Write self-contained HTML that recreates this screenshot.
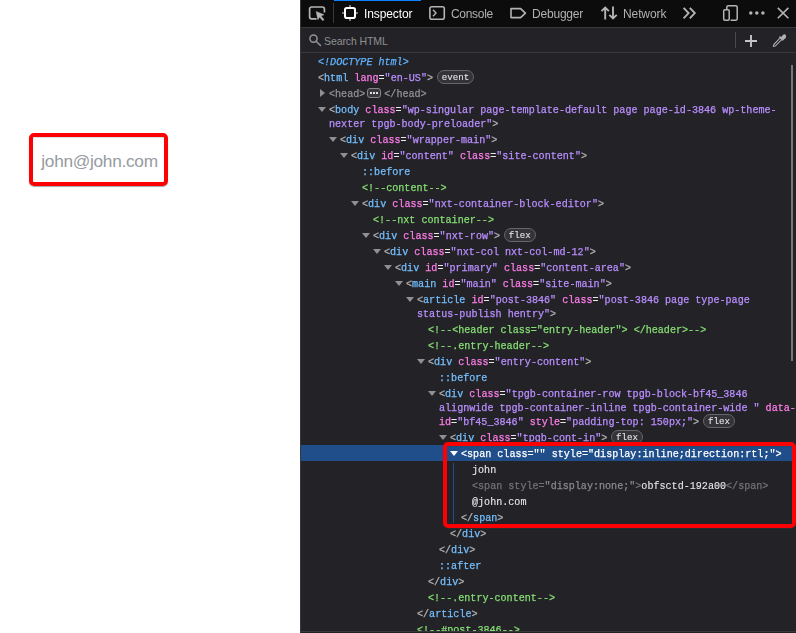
<!DOCTYPE html>
<html lang="en">
<head>
<meta charset="utf-8">
<title>Inspector</title>
<style>
html,body{margin:0;padding:0;}
body{width:796px;height:633px;overflow:hidden;background:#fff;position:relative;font-family:"Liberation Sans",sans-serif;}
#page{position:absolute;left:0;top:0;width:300px;height:633px;background:#fff;}
#mail{position:absolute;left:41.3px;top:149px;font-size:17.3px;line-height:24px;color:#979aa0;white-space:pre;letter-spacing:-0.3px;}
.redbox{position:absolute;box-sizing:border-box;border:4px solid #fd0003;border-radius:5px;box-shadow:0 1px 1px rgba(40,60,60,.45);}
.redbox i{position:absolute;left:0;top:0;right:0;bottom:0;border-radius:2px;box-shadow:inset 0 1px 1px rgba(40,60,60,.18);}
#dt{position:absolute;left:300px;top:0;width:496px;height:633px;background:#232327;overflow:hidden;}
#tb{position:absolute;left:0;top:0;width:496px;height:27px;background:#0c0c0d;border-bottom:1px solid #38383d;}
#tb .tab{will-change:transform;position:absolute;top:1px;height:27px;font-size:12px;line-height:27px;letter-spacing:-0.1px;color:#b1b1b3;white-space:pre;}
#tb .tab.sel{color:#fff;}
#tb svg{position:absolute;}
#sb{position:absolute;left:0;top:28px;width:496px;height:24px;background:#232327;border-bottom:1px solid #38383d;}
#sb .ph{position:absolute;left:24px;top:0;font-size:10.5px;line-height:26px;color:#8f8f94;white-space:pre;letter-spacing:-0.1px;}
#sb svg{position:absolute;}
#mk{position:absolute;left:0;top:0;width:496px;height:633px;font-family:"Liberation Mono",monospace;font-size:10.08px;line-height:14px;color:#b1b1b3;-webkit-text-stroke:0.25px;}
.r{position:absolute;white-space:pre;height:14px;}
.t{color:#75bfff;}
.n{color:#ff7de9;}
.v{color:#b98eff;}
.c{color:#86de74;}
.p{color:#75bfff;}
.d{color:#5fb2ff;font-style:italic;}
.x{color:#e9e9ec;-webkit-text-stroke:0.1px;}
.g{color:#939395;}
.w{color:#fff;}
.k{color:#b1b1b3;}
.h{color:#727276;}
.h2{color:#8a8a8e;}
.e{display:inline-block;vertical-align:top;margin:0 3px 0 2px;width:14px;height:10px;box-sizing:border-box;border:1px solid #85858a;border-radius:3px;background:#38383d;position:relative;}
.e:before{content:"";position:absolute;left:2px;top:3px;width:2px;height:2px;background:#e0e0e2;box-shadow:3px 0 0 #e0e0e2,6px 0 0 #e0e0e2;}
.b{display:inline-block;box-sizing:border-box;height:14px;line-height:13.4px;border:1px solid #66666b;border-radius:7px;padding:0 3.75px;margin:-2px 0 0 4px;font-size:9.17px;color:#e4e4e6;background:#333338;vertical-align:top;-webkit-text-stroke:0.1px;}
.a{position:absolute;width:0;height:0;}
.a.dn{border-left:4px solid transparent;border-right:4px solid transparent;border-top:5px solid #8f8f94;}
.a.rt{border-top:4px solid transparent;border-bottom:4px solid transparent;border-left:5px solid #8f8f94;}
.sep{position:absolute;width:1px;background:#38383d;}
.hl{position:absolute;left:34px;top:0;width:87px;height:1px;background:#0a84ff;}
#dt:before{content:"";position:absolute;left:0;top:0;width:1px;height:633px;background:#38383d;z-index:5;}
.guide{position:absolute;left:153px;top:463px;width:1px;height:60px;background:#204e8a;}
.thumb{position:absolute;left:491px;top:65px;width:2px;height:296px;background:#77777a;}
.bot{position:absolute;left:0;top:631px;width:496px;height:2px;box-sizing:border-box;background:#232327;border-top:1px solid #38383d;z-index:4;}
#selrow{position:absolute;left:0;top:445px;width:496px;height:16px;background:#204e8a;}
</style>
</head>
<body>
<div id="page">
  <div id="mail">john@john.com</div>
  <div class="redbox" style="left:29px;top:133px;width:139px;height:53px;"><i></i></div>
</div>
<div id="dt">
  <div id="tb">
    <svg style="left:8px;top:5px" width="18" height="16" viewBox="0 0 18 16" fill="none" stroke="#b4b4b6" stroke-width="1.7"><path d="M8.6 13.8H3.6a2 2 0 0 1-2-2V4a2 2 0 0 1 2-2h10.8a2 2 0 0 1 2 2v3.6"/><path d="M8.2 6.5l7.8 3.2-3.1 1.2 3.1 3.7-1.3 1.1-3.1-3.7-1.7 2.7z" fill="#b4b4b6" stroke="#b4b4b6" stroke-width=".5" stroke-linejoin="round"/></svg>
    <i class="sep" style="left:33px;top:3px;height:20px"></i>
    <i class="hl"></i>
    <svg style="left:41px;top:5px" width="18" height="16" viewBox="0 0 18 16" fill="none"><path d="M9 0v2M9 14v2M1 8h2M15 8h2" stroke="#9a9a9c" stroke-width="1.6"/><rect x="4" y="3" width="10" height="10" rx="1.8" stroke="#fff" stroke-width="2"/></svg>
    <div class="tab sel" style="left:64px">Inspector</div>
    <svg style="left:128px;top:5px" width="18" height="16" viewBox="0 0 18 16" fill="none" stroke="#b4b4b6" stroke-width="1.6"><rect x="1.9" y="1.8" width="14.4" height="12.4" rx="2"/><path d="M5 4.8l3 3.2-3 3.2" stroke-width="1.4"/></svg>
    <div class="tab" style="left:151.3px;letter-spacing:-0.3px">Console</div>
    <svg style="left:209px;top:5px" width="18" height="16" viewBox="0 0 18 16" fill="none" stroke="#b4b4b6" stroke-width="1.6" stroke-linejoin="round"><path d="M2 3.6h9.6l4.8 4.5-4.8 4.5H2z"/></svg>
    <div class="tab" style="left:232.3px;letter-spacing:-0.2px">Debugger</div>
    <svg style="left:300px;top:5px" width="18" height="16" viewBox="0 0 18 16" fill="none" stroke="#b4b4b6" stroke-width="1.9"><path d="M5.2 14.6V2.6M1.5 6.2l3.7-3.7 3.7 3.7M13 1.4v12M9.3 9.8l3.7 3.7 3.7-3.7"/></svg>
    <div class="tab" style="left:323px">Network</div>
    <svg style="left:382px;top:6px" width="15" height="14" viewBox="0 0 15 14" fill="none" stroke="#b4b4b6" stroke-width="1.9"><path d="M1.6 1.8l5 5.3-5 5.3M7.8 1.8l5 5.3-5 5.3"/></svg>
    <svg style="left:422px;top:4px" width="17" height="18" viewBox="0 0 17 18" fill="none" stroke="#b4b4b6" stroke-width="1.5"><path d="M4.8 5.2V3.3a1.5 1.5 0 0 1 1.5-1.5h7.4a1.5 1.5 0 0 1 1.5 1.5v11.4a1.5 1.5 0 0 1-1.5 1.5H8.6"/><rect x="1.7" y="5.8" width="5.5" height="10.4" rx="1.2"/></svg>
    <svg style="left:448px;top:10px" width="18" height="6" viewBox="0 0 18 6" fill="#b4b4b6"><circle cx="2.8" cy="2.9" r="1.75"/><circle cx="8.8" cy="2.9" r="1.75"/><circle cx="14.9" cy="2.9" r="1.75"/></svg>
    <svg style="left:476px;top:6px" width="14" height="14" viewBox="0 0 14 14" fill="none" stroke="#b4b4b6" stroke-width="1.6"><path d="M1.8 1.9l10.6 10.4M12.4 1.9L1.8 12.3"/></svg>
  </div>
  <div id="sb">
    <svg style="left:7px;top:6px" width="16" height="16" viewBox="0 0 16 16" fill="none" stroke="#939398" stroke-width="1.5"><circle cx="6.5" cy="4.6" r="3.6"/><path d="M9.1 7.2l4.4 4.3" stroke-linecap="round"/></svg>
    <span class="ph">Search HTML</span>
    <i class="sep" style="left:435px;top:4px;height:16px;background:#4a4a4f"></i>
    <svg style="left:444px;top:6px" width="14" height="14" viewBox="0 0 14 14" fill="none" stroke="#c4c4c6" stroke-width="1.9"><path d="M7 1v12M1 7h12"/></svg>
    <svg style="left:471.6px;top:5.4px" width="14.5" height="14.5" viewBox="0 0 16 16" fill="none" stroke="#b1b1b3" stroke-width="1.2"><path d="M9.2 5.2l1.8 1.8-7.4 7.4-2 .4.4-2z"/><path d="M8.2 3.8l4.2 4.2M10 5.8l2.6-3a1.4 1.4 0 0 1 2 2l-3 2.6z" fill="#b1b1b3" stroke-width="1.6"/></svg>
  </div>
  <div id="selrow"></div>
  <i class="guide"></i>
  <i class="thumb"></i>
  <i class="bot"></i>
  <div id="mk">
<div class="r" style="left:18px;top:56px"><span class="d">&lt;!DOCTYPE html&gt;</span></div>
<div class="r" style="left:18px;top:72px"><span class="k">&lt;</span><span class="t">html</span> <span class="n">lang</span><span class="x">=</span><span class="v">"en-US"</span><span class="k">&gt;</span><span class="b">event</span></div>
<i class="a rt" style="left:20px;top:89px"></i>
<div class="r g" style="left:29px;top:88px">&lt;head&gt;<span class="e"></span>&lt;/head&gt;</div>
<i class="a dn" style="left:18px;top:107px"></i>
<div class="r" style="left:29px;top:104px"><span class="k">&lt;</span><span class="t">body</span> <span class="n">class</span><span class="x">=</span><span class="v">"wp-singular page-template-default page page-id-3846 wp-theme-<br>nexter tpgb-body-preloader"</span><span class="k">&gt;</span></div>
<i class="a dn" style="left:29px;top:137px"></i>
<div class="r" style="left:40px;top:134px"><span class="k">&lt;</span><span class="t">div</span> <span class="n">class</span><span class="x">=</span><span class="v">"wrapper-main"</span><span class="k">&gt;</span></div>
<i class="a dn" style="left:40px;top:153px"></i>
<div class="r" style="left:51px;top:150px"><span class="k">&lt;</span><span class="t">div</span> <span class="n">id</span><span class="x">=</span><span class="v">"content"</span> <span class="n">class</span><span class="x">=</span><span class="v">"site-content"</span><span class="k">&gt;</span></div>
<div class="r" style="left:62px;top:166px"><span class="p">::before</span></div>
<div class="r" style="left:62px;top:182px"><span class="c">&lt;!--content--&gt;</span></div>
<i class="a dn" style="left:51px;top:201px"></i>
<div class="r" style="left:62px;top:198px"><span class="k">&lt;</span><span class="t">div</span> <span class="n">class</span><span class="x">=</span><span class="v">"nxt-container-block-editor"</span><span class="k">&gt;</span></div>
<div class="r" style="left:73px;top:214px"><span class="c">&lt;!--nxt container--&gt;</span></div>
<i class="a dn" style="left:62px;top:233px"></i>
<div class="r" style="left:73px;top:230px"><span class="k">&lt;</span><span class="t">div</span> <span class="n">class</span><span class="x">=</span><span class="v">"nxt-row"</span><span class="k">&gt;</span><span class="b">flex</span></div>
<i class="a dn" style="left:73px;top:249px"></i>
<div class="r" style="left:84px;top:246px"><span class="k">&lt;</span><span class="t">div</span> <span class="n">class</span><span class="x">=</span><span class="v">"nxt-col nxt-col-md-12"</span><span class="k">&gt;</span></div>
<i class="a dn" style="left:84px;top:265px"></i>
<div class="r" style="left:95px;top:262px"><span class="k">&lt;</span><span class="t">div</span> <span class="n">id</span><span class="x">=</span><span class="v">"primary"</span> <span class="n">class</span><span class="x">=</span><span class="v">"content-area"</span><span class="k">&gt;</span></div>
<i class="a dn" style="left:95px;top:281px"></i>
<div class="r" style="left:106px;top:278px"><span class="k">&lt;</span><span class="t">main</span> <span class="n">id</span><span class="x">=</span><span class="v">"main"</span> <span class="n">class</span><span class="x">=</span><span class="v">"site-main"</span><span class="k">&gt;</span></div>
<i class="a dn" style="left:106px;top:297px"></i>
<div class="r" style="left:117px;top:294px"><span class="k">&lt;</span><span class="t">article</span> <span class="n">id</span><span class="x">=</span><span class="v">"post-3846"</span> <span class="n">class</span><span class="x">=</span><span class="v">"post-3846 page type-page<br>status-publish hentry"</span><span class="k">&gt;</span></div>
<div class="r" style="left:128px;top:324px"><span class="c">&lt;!--&lt;header class="entry-header"&gt; &lt;/header&gt;--&gt;</span></div>
<div class="r" style="left:128px;top:340px"><span class="c">&lt;!--.entry-header--&gt;</span></div>
<i class="a dn" style="left:117px;top:359px"></i>
<div class="r" style="left:128px;top:356px"><span class="k">&lt;</span><span class="t">div</span> <span class="n">class</span><span class="x">=</span><span class="v">"entry-content"</span><span class="k">&gt;</span></div>
<div class="r" style="left:139px;top:372px"><span class="p">::before</span></div>
<i class="a dn" style="left:128px;top:391px"></i>
<div class="r" style="left:139px;top:388px"><span class="k">&lt;</span><span class="t">div</span> <span class="n">class</span><span class="x">=</span><span class="v">"tpgb-container-row tpgb-block-bf45_3846<br>alignwide tpgb-container-inline tpgb-container-wide "</span> <span class="n">data-<br>id</span><span class="x">=</span><span class="v">"bf45_3846"</span> <span class="n">style</span><span class="x">=</span><span class="v">"padding-top: 150px;"</span><span class="k">&gt;</span><span class="b">flex</span></div>
<i class="a dn" style="left:139px;top:435px"></i>
<div class="r" style="left:150px;top:432px"><span class="k">&lt;</span><span class="t">div</span> <span class="n">class</span><span class="x">=</span><span class="v">"tpgb-cont-in"</span><span class="k">&gt;</span><span class="b">flex</span></div>
<i class="a dn w" style="left:150px;top:451px;border-top-color:#fff"></i>
<div class="r w" style="left:161px;top:448px">&lt;span class="" style="display:inline;direction:rtl;"&gt;</div>
<div class="r x" style="left:172px;top:464px">john</div>
<div class="r" style="left:172px;top:480px"><span class="h">&lt;span style=</span><span class="h2">"display:none;"</span><span class="h">&gt;</span><span class="x">obfsctd-192a00</span><span class="h">&lt;/span&gt;</span></div>
<div class="r x" style="left:172px;top:496px">@john.com</div>
<div class="r" style="left:161px;top:512px"><span class="k">&lt;/</span><span class="t">span</span><span class="k">&gt;</span></div>
<div class="r" style="left:150px;top:528px"><span class="k">&lt;/</span><span class="t">div</span><span class="k">&gt;</span></div>
<div class="r" style="left:139px;top:544px"><span class="k">&lt;/</span><span class="t">div</span><span class="k">&gt;</span></div>
<div class="r" style="left:139px;top:560px"><span class="p">::after</span></div>
<div class="r" style="left:128px;top:576px"><span class="k">&lt;/</span><span class="t">div</span><span class="k">&gt;</span></div>
<div class="r" style="left:128px;top:592px"><span class="c">&lt;!--.entry-content--&gt;</span></div>
<div class="r" style="left:117px;top:608px"><span class="k">&lt;/</span><span class="t">article</span><span class="k">&gt;</span></div>
<div class="r" style="left:117px;top:624px"><span class="c">&lt;!--#post-3846--&gt;</span></div>
<div class="redbox" style="left:143px;top:442px;width:353px;height:86px;"><i></i></div>
</div>
</div>
</body>
</html>
